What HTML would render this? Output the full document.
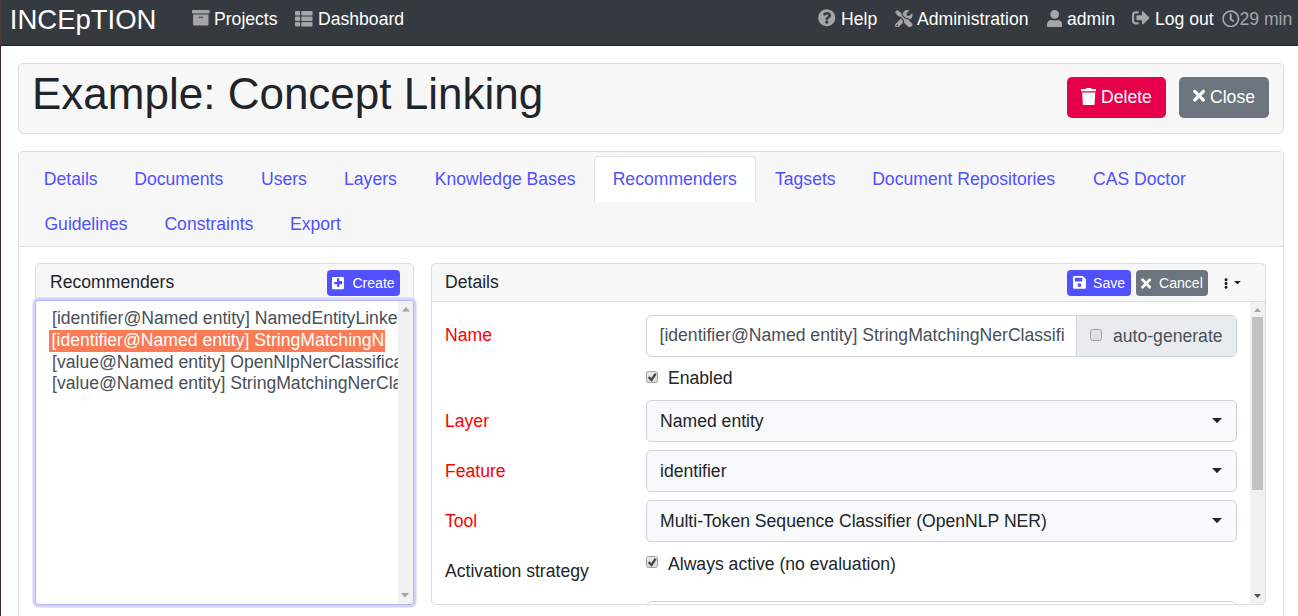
<!DOCTYPE html>
<html><head><meta charset="utf-8">
<style>
*{box-sizing:border-box;margin:0;padding:0}
html,body{width:1298px;height:616px;overflow:hidden;background:#fff;font-family:"Liberation Sans",sans-serif;color:#212529;font-size:17.6px}
.a{position:absolute}
.t{position:absolute;white-space:nowrap;line-height:1}
#edge{left:0;top:0;width:1px;height:616px;background:linear-gradient(#4e3a3a 0,#4e3a3a 45px,#2a2020 45px,#2a2020 46px,#3a2b2b 46px);z-index:50}
#nav{left:0;top:0;width:1298px;height:45px;background:#343a40;border-bottom:1px solid #1f2327;height:46px}
.nt{color:#fff;font-size:17.6px;top:11.1px}
.ic{fill:#a3a5a9}
.card{position:absolute;background:#f7f7f7;border:1px solid #dfdfdf;border-radius:5px}
.btn{position:absolute;border-radius:5px;color:#fff}
.tabt{color:#5050ff}
.lbl{color:#f00;font-size:17.6px}
.sel{position:absolute;background:#f8f9fa;border:1px solid #ced4da;border-radius:5px}
.opt{color:#495057;font-size:17.6px}
</style></head><body>
<div id="edge" class="a"></div>
<div id="nav" class="a">
  <div class="t" style="left:9.8px;top:6px;font-size:27.5px;color:#fff">INCEpTION</div>
  <svg class="a" style="left:192.0px;top:9.4px" width="17.60" height="17.6" viewBox="0 0 512 512"><path fill="#a3a5a9" d="M32 448c0 17.7 14.3 32 32 32h384c17.7 0 32-14.3 32-32V160H32v288zm160-212c0-6.6 5.4-12 12-12h104c6.6 0 12 5.4 12 12v8c0 6.6-5.4 12-12 12H204c-6.6 0-12-5.4-12-12v-8zM480 32H32C14.3 32 0 46.3 0 64v48c0 8.8 7.2 16 16 16h480c8.8 0 16-7.2 16-16V64c0-17.7-14.3-32-32-32z"/></svg>
  <div class="t nt" style="left:214px">Projects</div>
  <svg class="a" style="left:295.3px;top:9.6px" width="17.60" height="17.6" viewBox="0 0 512 512"><path fill="#a3a5a9" d="M149.333 216v80c0 13.255-10.745 24-24 24H24c-13.255 0-24-10.745-24-24v-80c0-13.255 10.745-24 24-24h101.333c13.255 0 24 10.745 24 24zM0 376v80c0 13.255 10.745 24 24 24h101.333c13.255 0 24-10.745 24-24v-80c0-13.255-10.745-24-24-24H24c-13.255 0-24 10.745-24 24zM125.333 32H24C10.745 32 0 42.745 0 56v80c0 13.255 10.745 24 24 24h101.333c13.255 0 24-10.745 24-24V56c0-13.255-10.745-24-24-24zm80 448H488c13.255 0 24-10.745 24-24v-80c0-13.255-10.745-24-24-24H205.333c-13.255 0-24 10.745-24 24v80c0 13.255 10.745 24 24 24zm-24-424v80c0 13.255 10.745 24 24 24H488c13.255 0 24-10.745 24-24V56c0-13.255-10.745-24-24-24H205.333c-13.255 0-24 10.745-24 24zm24 264H488c13.255 0 24-10.745 24-24v-80c0-13.255-10.745-24-24-24H205.333c-13.255 0-24 10.745-24 24v80c0 13.255 10.745 24 24 24z"/></svg>
  <div class="t nt" style="left:318px">Dashboard</div>

  <svg class="a" style="left:818.0px;top:9.1px" width="17.60" height="17.6" viewBox="0 0 512 512"><path fill="#a3a5a9" d="M504 256c0 136.997-111.043 248-248 248S8 392.997 8 256C8 119.083 119.043 8 256 8s248 111.083 248 248zM262.655 90c-54.497 0-89.255 22.957-116.549 63.758-3.536 5.286-2.353 12.415 2.715 16.258l34.699 26.31c5.205 3.947 12.621 3.008 16.665-2.122 17.864-22.658 30.113-35.797 57.303-35.797 20.429 0 45.698 13.148 45.698 32.958 0 14.976-12.363 22.667-32.534 33.976C247.128 238.528 216 254.941 216 296v4c0 6.627 5.373 12 12 12h56c6.627 0 12-5.373 12-12v-1.333c0-28.462 83.186-29.647 83.186-106.667 0-58.002-60.165-102-116.531-102zM256 338c-25.365 0-46 20.635-46 46 0 25.364 20.635 46 46 46s46-20.636 46-46c0-25.365-20.635-46-46-46z"/></svg>
  <div class="t nt" style="left:841px">Help</div>
  <svg class="a" style="left:895.0px;top:9.6px" width="17.60" height="17.6" viewBox="0 0 512 512"><path fill="#a3a5a9" d="M501.1 395.7L384 278.6c-23.1-23.1-57.6-27.6-85.4-13.9L192 158.1V96L64 0 0 64l96 128h62.1l106.6 106.6c-13.6 27.8-9.2 62.3 13.9 85.4l117.1 117.1c14.6 14.6 38.2 14.6 52.7 0l52.7-52.7c14.5-14.6 14.5-38.2 0-52.7zM331.7 225c28.3 0 54.9 11 74.9 31l19.4 19.4c15.800-6.9 30.8-16.5 43.8-29.5 37.1-37.1 49.7-89.3 37.9-136.7-2.2-9-13.5-12.1-20.1-5.5l-74.4 74.4-67.9-11.3L334 98.9l74.4-74.4c6.6-6.6 3.4-17.9-5.7-20.2-47.4-11.7-99.6.9-136.6 37.9-28.5 28.5-41.9 66.1-41.2 103.6l82.1 82.1c8.1-1.9 16.5-2.9 24.7-2.9zm-103.9 82l-56.7-56.7L18.7 402.8c-25 25-25 65.5 0 90.5s65.5 25 90.5 0l123.6-123.6c-7.6-19.9-9.9-41.6-5-62.7zM64 472c-13.2 0-24-10.8-24-24 0-13.3 10.7-24 24-24s24 10.7 24 24c0 13.2-10.7 24-24 24z"/></svg>
  <div class="t nt" style="left:917px">Administration</div>
  <svg class="a" style="left:1046.5px;top:9.7px" width="15.40" height="17.6" viewBox="0 0 448 512"><path fill="#a3a5a9" d="M224 256c70.7 0 128-57.3 128-128S294.7 0 224 0 96 57.3 96 128s57.3 128 128 128zm89.6 32h-16.7c-22.2 10.2-46.9 16-72.9 16s-50.6-5.8-72.9-16h-16.7C60.2 288 0 348.2 0 422.4V464c0 26.5 21.5 48 48 48h352c26.5 0 48-21.5 48-48v-41.6c0-74.2-60.2-134.4-134.4-134.4z"/></svg>
  <div class="t nt" style="left:1067px">admin</div>
  <svg class="a" style="left:1132.2px;top:9.2px" width="17.60" height="17.6" viewBox="0 0 512 512"><path fill="#a3a5a9" d="M497 273L329 441c-15 15-41 4.5-41-17v-96H152c-13.3 0-24-10.7-24-24v-96c0-13.3 10.7-24 24-24h136V88c0-21.4 25.9-32 41-17l168 168c9.3 9.4 9.300 24.6 0 34zM192 436v-40c0-6.6-5.4-12-12-12H96c-17.7 0-32-14.3-32-32V160c0-17.7 14.3-32 32-32h84c6.6 0 12-5.4 12-12V76c0-6.6-5.4-12-12-12H96c-53 0-96 43-96 96v192c0 53 43 96 96 96h84c6.6 0 12-5.4 12-12z"/></svg>
  <div class="t nt" style="left:1155px">Log out</div>
  <svg class="a" style="left:1222.2px;top:9.6px" width="17.60" height="17.6" viewBox="0 0 512 512"><path fill="#a3a6aa" d="M256 8C119 8 8 119 8 256s111 248 248 248 248-111 248-248S393 8 256 8zm0 448c-110.5 0-200-89.5-200-200S145.5 56 256 56s200 89.5 200 200-89.5 200-200 200zm61.8-104.4l-84.9-61.7c-5.2-3.8-8.3-9.8-8.3-16.2V116c0-6.6 5.4-12 12-12h32c6.6 0 12 5.4 12 12v141.7l66.8 48.6c5.4 3.9 6.5 11.4 2.6 16.8L334.6 349c-3.9 5.3-11.4 6.5-16.8 2.6z"/></svg>
  <div class="t nt" style="left:1239.5px;color:#a3a6aa">29 min</div>
</div>

<!-- title card -->
<div class="card" style="left:18px;top:63px;width:1266px;height:71px"></div>
<div class="t" style="left:32px;top:72.2px;font-size:44px;color:#212529">Example: Concept Linking</div>
<div class="btn" style="left:1067px;top:77px;width:99px;height:41px;background:#e60049"></div>
<svg class="a" style="left:1081.0px;top:87.8px" width="15.40" height="17.6" viewBox="0 0 448 512"><path fill="#fff" d="M432 32H312l-9.4-18.7A24 24 0 0 0 281.1 0H166.8a23.72 23.72 0 0 0-21.4 13.3L136 32H16A16 16 0 0 0 0 48v32a16 16 0 0 0 16 16h416a16 16 0 0 0 16-16V48a16 16 0 0 0-16-16zM53.2 467a48 48 0 0 0 47.9 45h245.8a48 48 0 0 0 47.9-45L416 128H32z"/></svg>
<div class="t" style="left:1101px;top:88.6px;color:#fff">Delete</div>
<div class="btn" style="left:1179px;top:77px;width:90px;height:41px;background:#6c757d"></div>
<svg class="a" style="left:1193.0px;top:86.9px" width="12.10" height="17.6" viewBox="0 0 352 512"><path fill="#fff" d="M242.72 256l100.07-100.07c12.28-12.28 12.28-32.19 0-44.48l-22.24-22.24c-12.28-12.28-32.19-12.28-44.48 0L176 189.28 75.93 89.21c-12.28-12.28-32.19-12.28-44.48 0L9.21 111.45c-12.28 12.28-12.28 32.19 0 44.48L109.28 256 9.21 356.070c-12.28 12.28-12.28 32.19 0 44.48l22.24 22.24c12.28 12.28 32.2 12.28 44.48 0L176 322.72l100.07 100.07c12.28 12.28 32.2 12.28 44.48 0l22.24-22.24c12.28-12.28 12.28-32.19 0-44.48L242.72 256z"/></svg>
<div class="t" style="left:1210px;top:88.6px;color:#fff">Close</div>

<!-- tabs card -->
<div class="a" style="left:18px;top:151px;width:1266px;height:480px;border:1px solid #dfdfdf;border-radius:5px;background:#fff"></div>
<div class="a" style="left:19px;top:152px;width:1264px;height:95px;background:#f7f7f7;border-bottom:1px solid #dfdfdf;border-radius:4px 4px 0 0"></div>
<div class="a" style="left:594px;top:156px;width:162px;height:46px;background:#fff;border:1px solid #dee2e6;border-bottom:none;border-radius:5px 5px 0 0"></div>
<div class="t tabt" style="left:43.86px;top:170.9px">Details</div>
<div class="t tabt" style="left:134.26px;top:170.9px">Documents</div>
<div class="t tabt" style="left:260.94px;top:170.9px">Users</div>
<div class="t tabt" style="left:344.06px;top:170.9px">Layers</div>
<div class="t tabt" style="left:434.66px;top:170.9px">Knowledge Bases</div>
<div class="t tabt" style="left:612.66px;top:170.9px">Recommenders</div>
<div class="t tabt" style="left:775.00px;top:170.9px">Tagsets</div>
<div class="t tabt" style="left:872.16px;top:170.9px">Document Repositories</div>
<div class="t tabt" style="left:1093.01px;top:170.9px">CAS Doctor</div>
<div class="t tabt" style="left:44.41px;top:215.9px">Guidelines</div>
<div class="t tabt" style="left:164.41px;top:215.9px">Constraints</div>
<div class="t tabt" style="left:289.96px;top:215.9px">Export</div>

<!-- left panel -->
<div class="card" style="left:35px;top:263px;width:379px;height:342px;background:#f7f7f7;border-radius:5px"></div>
<div class="t" style="left:50px;top:274.1px">Recommenders</div>
<div class="btn" style="left:327px;top:270px;width:73px;height:26px;background:#5050ff;border-radius:4px"></div>
<svg class="a" style="left:331.9px;top:276.0px" width="12.32" height="14.08" viewBox="0 0 448 512"><path fill="#fff" d="M400 32H48C21.5 32 0 53.5 0 80v352c0 26.5 21.5 48 48 48h352c26.5 0 48-21.5 48-48V80c0-26.5-21.5-48-48-48zm-32 252c0 6.6-5.4 12-12 12h-92v92c0 6.6-5.4 12-12 12h-56c-6.6 0-12-5.4-12-12v-92H92c-6.6 0-12-5.4-12-12v-56c0-6.6 5.4-12 12-12h92V92c0-6.6 5.4-12 12-12h56c6.6 0 12 5.4 12 12v92h92c6.6 0 12 5.4 12 12v56z"/></svg>
<div class="t" style="left:352.4px;top:275.8px;font-size:14.08px;color:#fff">Create</div>
<!-- listbox -->
<div class="a" style="left:35px;top:300px;width:379px;height:305px;border:1px solid #b4b4f6;border-radius:4px;background:#fff;overflow:hidden;box-shadow:0 0 0 2.6px #d2d2fb">
  <div class="a" style="left:362px;top:0;width:15px;height:302px;background:#f1f1f1"></div>
  <svg class="a" style="left:365.5px;top:6px" width="8" height="5" viewBox="0 0 8 5"><path d="M4 0 8 4.5H0z" fill="#a3a3a3"/></svg>
  <svg class="a" style="left:365px;top:292px" width="8" height="5" viewBox="0 0 8 5"><path d="M0 0h8L4 4.5z" fill="#a3a3a3"/></svg>
  <div class="a" style="left:13px;top:7px;width:349px;height:88px;overflow:hidden">
    <div class="t opt" style="left:3px;top:1.6px">[identifier@Named entity] NamedEntityLinker</div>
    <div class="a" style="left:0;top:22px;width:336px;height:22px;background:#fa7b55;overflow:hidden"><div class="t opt" style="left:2.6px;top:2px;color:#fff">[identifier@Named entity] StringMatchingNerClassifier</div></div>
    <div class="t opt" style="left:3px;top:45.5px">[value@Named entity] OpenNlpNerClassificationTool</div>
    <div class="t opt" style="left:3px;top:67.4px">[value@Named entity] StringMatchingNerClassifier</div>
  </div>
</div>

<!-- right panel -->
<div class="a" style="left:431px;top:263px;width:835px;height:342px;border:1px solid #dfdfdf;border-radius:5px;background:#fff;overflow:hidden">
  <div class="a" style="left:0;top:0;width:833px;height:38px;background:#f7f7f7;border-bottom:1px solid #dfdfdf"></div>
</div>
<div class="t" style="left:445px;top:274.1px">Details</div>
<div class="btn" style="left:1067px;top:270px;width:64px;height:26px;background:#5050ff;border-radius:4px"></div>
<svg class="a" style="left:1072.7px;top:275.1px" width="12.95" height="14.8" viewBox="0 0 448 512"><path fill="#fff" d="M433.941 129.941l-83.882-83.882A48 48 0 0 0 316.118 32H48C21.49 32 0 53.490 0 80v352c0 26.51 21.49 48 48 48h352c26.51 0 48-21.49 48-48V163.882a48 48 0 0 0-14.059-33.941zM224 416c-35.346 0-64-28.654-64-64 0-35.346 28.654-64 64-64s64 28.654 64 64c0 35.346-28.654 64-64 64zm96-304.52V212c0 6.627-5.373 12-12 12H76c-6.627 0-12-5.373-12-12V108c0-6.627 5.373-12 12-12h228.52c3.183 0 6.235 1.264 8.485 3.515l3.48 3.48A11.996 11.996 0 0 1 320 111.48z"/></svg>
<div class="t" style="left:1093px;top:275.8px;font-size:14.08px;color:#fff">Save</div>
<div class="btn" style="left:1136px;top:270px;width:72px;height:26px;background:#6c757d;border-radius:4px"></div>
<svg class="a" style="left:1140.8px;top:275.6px" width="10.31" height="15.0" viewBox="0 0 352 512"><path fill="#fff" d="M242.72 256l100.07-100.07c12.28-12.28 12.28-32.19 0-44.48l-22.24-22.24c-12.28-12.28-32.19-12.28-44.48 0L176 189.28 75.93 89.21c-12.28-12.28-32.19-12.28-44.48 0L9.21 111.45c-12.28 12.28-12.28 32.19 0 44.48L109.28 256 9.21 356.070c-12.28 12.28-12.28 32.19 0 44.48l22.24 22.24c12.28 12.28 32.2 12.28 44.48 0L176 322.72l100.07 100.07c12.28 12.28 32.2 12.28 44.48 0l22.24-22.24c12.28-12.28 12.28-32.19 0-44.48L242.72 256z"/></svg>
<div class="t" style="left:1159px;top:275.8px;font-size:14.08px;color:#fff">Cancel</div>
<svg class="a" style="left:1223.5px;top:277.8px" width="4.12" height="11.0" viewBox="0 0 192 512"><path fill="#212529" d="M96 184c39.8 0 72 32.2 72 72s-32.2 72-72 72-72-32.2-72-72 32.2-72 72-72zM24 80c0 39.8 32.2 72 72 72s72-32.2 72-72S135.8 8 96 8 24 40.2 24 80zm0 352c0 39.8 32.2 72 72 72s72-32.2 72-72-32.2-72-72-72-72 32.2-72 72z"/></svg><svg class="a" style="left:1234.3px;top:281px" width="6.8" height="3.4" viewBox="0 0 6.8 3.4"><path d="M0 0h6.8L3.4 3.4z" fill="#212529"/></svg>

<div class="a" style="left:0;top:0;width:1298px;height:616px;clip-path:inset(302px 33px 12px 432px round 0 0 5px 5px)">
<!-- form -->
<div class="t lbl" style="left:445px;top:327.1px">Name</div>
<div class="a" style="left:646px;top:315px;width:591px;height:42px;border:1px solid #ced4da;border-radius:5px;background:#fff;overflow:hidden">
  <div class="a" style="left:429px;top:-1px;width:162px;height:42px;background:#e9ecef;border-left:1px solid #ced4da"></div>
</div>
<div class="a" style="left:659.5px;top:318px;width:404px;height:36px;overflow:hidden"><div class="t" style="left:0;top:9.1px;color:#495057">[identifier@Named entity] StringMatchingNerClassifier</div></div>
<div class="a" style="left:1090px;top:329px;width:12px;height:12px;border:1px solid #a3a3a3;border-radius:2.5px;background:linear-gradient(#e6e6e6,#dadada)"></div>
<div class="t" style="left:1113px;top:328.1px;color:#495057">auto-generate</div>

<div class="a" style="left:646px;top:371px;width:12px;height:12px;border:1px solid #a3a3a3;border-radius:2.5px;background:linear-gradient(#e6e6e6,#dadada)"></div>
<svg class="a" style="left:647px;top:372px" width="10" height="10" viewBox="0 0 10 10"><path d="M1.6 5.2 4.5 7.9 8.7 1.6" stroke="#474747" stroke-width="2.3" fill="none"/></svg>
<div class="t" style="left:668px;top:370.3px">Enabled</div>

<div class="t lbl" style="left:445px;top:412.5px">Layer</div>
<div class="sel" style="left:646px;top:400px;width:591px;height:42px"></div>
<div class="t" style="left:660px;top:412.5px">Named entity</div>
<svg class="a" style="left:1212px;top:418px" width="10" height="5.2" viewBox="0 0 10 5.2"><path d="M0 0h10L5 5.2z" fill="#212529"/></svg>

<div class="t lbl" style="left:445px;top:463.4px">Feature</div>
<div class="sel" style="left:646px;top:450px;width:591px;height:42px"></div>
<div class="t" style="left:660px;top:463.4px">identifier</div>
<svg class="a" style="left:1212px;top:468px" width="10" height="5.2" viewBox="0 0 10 5.2"><path d="M0 0h10L5 5.2z" fill="#212529"/></svg>

<div class="t lbl" style="left:445px;top:513.3px">Tool</div>
<div class="sel" style="left:646px;top:500px;width:591px;height:42px"></div>
<div class="t" style="left:660px;top:513.3px">Multi-Token Sequence Classifier (OpenNLP NER)</div>
<svg class="a" style="left:1212px;top:518px" width="10" height="5.2" viewBox="0 0 10 5.2"><path d="M0 0h10L5 5.2z" fill="#212529"/></svg>

<div class="t" style="left:445px;top:563.1px">Activation strategy</div>
<div class="a" style="left:646px;top:556px;width:12px;height:12px;border:1px solid #a3a3a3;border-radius:2.5px;background:linear-gradient(#e6e6e6,#dadada)"></div>
<svg class="a" style="left:647px;top:557px" width="10" height="10" viewBox="0 0 10 10"><path d="M1.6 5.2 4.5 7.9 8.7 1.6" stroke="#474747" stroke-width="2.3" fill="none"/></svg>
<div class="t" style="left:668px;top:556px">Always active (no evaluation)</div>
<div class="sel" style="left:646px;top:601px;width:591px;height:42px;background:#fff;border-radius:6px"></div>

<!-- details scrollbar -->
<div class="a" style="left:1250px;top:302px;width:15px;height:302px;background:#f1f1f1"></div>
<div class="a" style="left:1252px;top:317px;width:11px;height:173px;background:#c1c1c1"></div>
<svg class="a" style="left:1254px;top:308px" width="7" height="4" viewBox="0 0 7 4"><path d="M3.5 0 7 4H0z" fill="#a3a3a3"/></svg>
<svg class="a" style="left:1254px;top:594px" width="7" height="4" viewBox="0 0 7 4"><path d="M0 0h7L3.5 4z" fill="#505050"/></svg>
</div>
<div class="a" style="left:431px;top:263px;width:835px;height:342px;border:1px solid #dfdfdf;border-radius:5px;pointer-events:none"></div>
</body></html>
